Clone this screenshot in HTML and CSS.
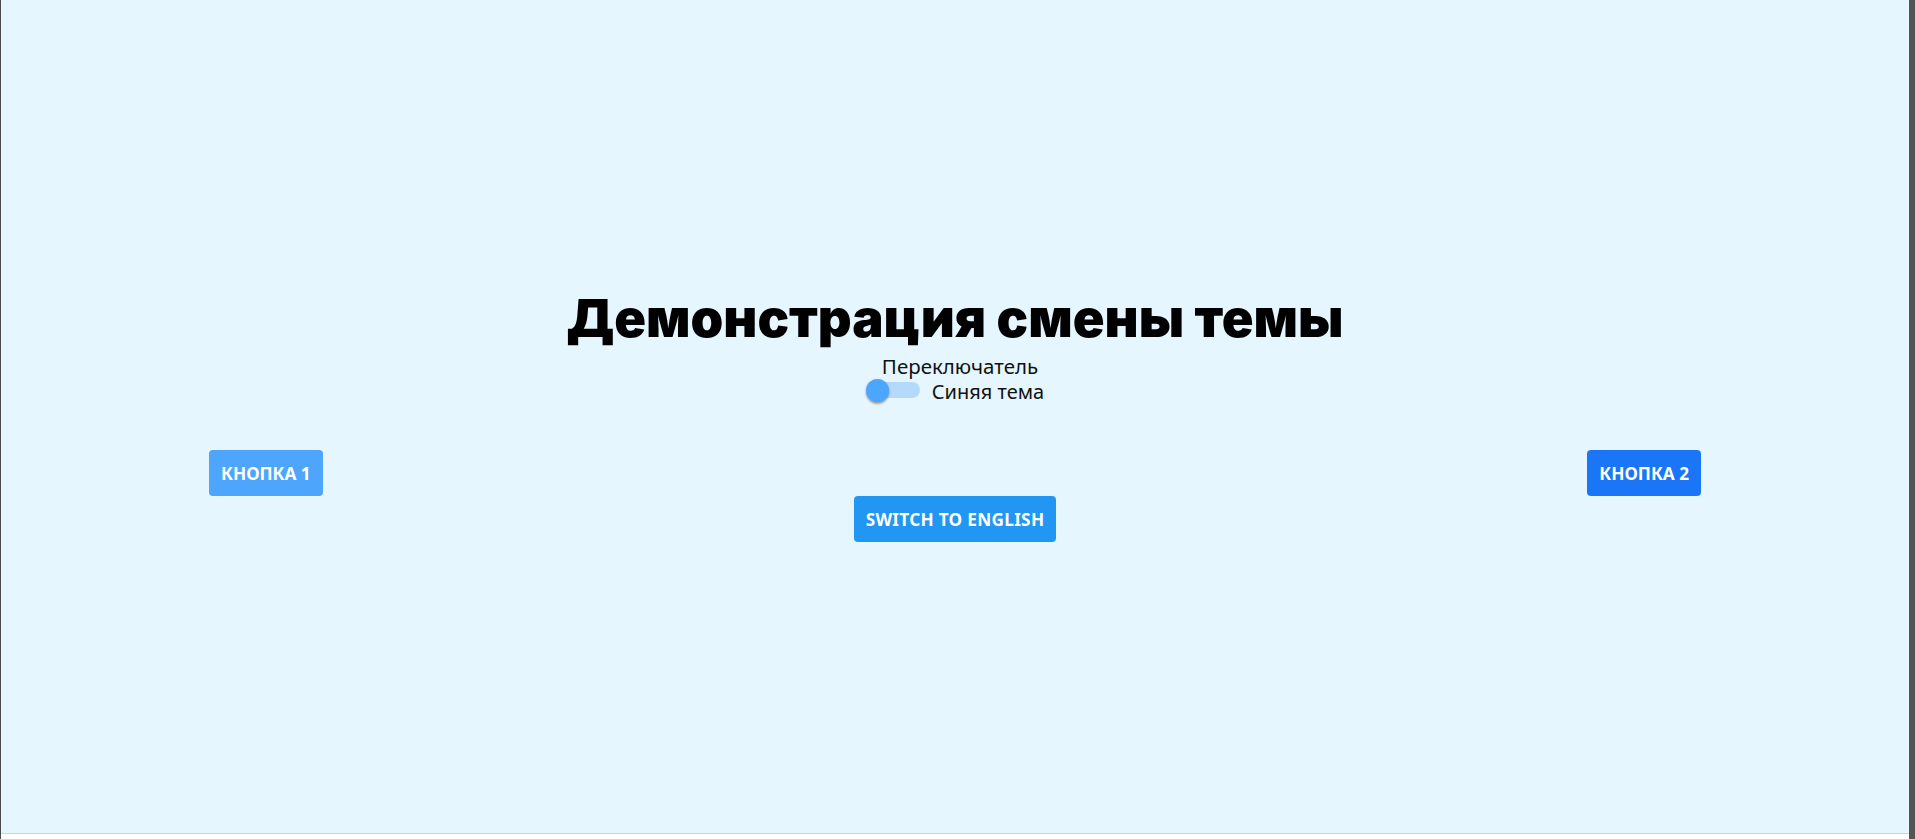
FILE: index.html
```html
<!DOCTYPE html>
<html lang="ru">
<head>
<meta charset="utf-8">
<title>Демонстрация смены темы</title>
<link rel="stylesheet" href="styles.css">
</head>
<body>
<div class="frame">
  <div class="edge-left"></div>
  <div class="column">
    <main class="page">
      <div class="content">
        <h1 class="title">Демонстрация смены темы</h1>
        <div class="switch-label">Переключатель</div>
        <label class="switch-row">
          <span class="switch">
            <span class="track"></span>
            <span class="thumb"></span>
          </span>
          <span class="switch-text">Синяя тема</span>
        </label>
        <div class="buttons-row">
          <button class="btn btn-light">Кнопка 1</button>
          <button class="btn btn-dark">Кнопка 2</button>
        </div>
        <button class="btn btn-main">Switch to English</button>
      </div>
    </main>
    <div class="status"></div>
  </div>
  <div class="edge-right"></div>
</div>
</body>
</html>
```
FILE: styles.css
```css
html, body {
  margin: 0;
  padding: 0;
  height: 100%;
  overflow: hidden;
}
body {
  background: #ffffff;
  font-family: "Noto Sans", "Open Sans", sans-serif;
}
.frame {
  display: flex;
  height: 839px;
}
.edge-left {
  width: 1px;
  background: #4b4b4b;
}
.edge-right {
  width: 6px;
  background: #545454;
}
.column {
  flex: 1;
  display: flex;
  flex-direction: column;
}
.page {
  height: 833px;
  background: #e5f6fe;
  display: flex;
  align-items: center;
  justify-content: center;
}
.status {
  flex: 1;
  border-top: 1px solid #d2d2d2;
  background: #ffffff;
}
.content {
  width: 100%;
  display: flex;
  flex-direction: column;
  align-items: center;
}
.title {
  margin: 0;
  font-family: Inter, "Liberation Sans", sans-serif;
  font-weight: 900;
  font-size: 52.5px;
  line-height: 54px;
  color: #000;
}
.switch-label {
  margin-top: 10px;
  padding-left: 10px;
  font-size: 20.5px;
  line-height: 22px;
  color: #111;
}
.switch-row {
  display: flex;
  align-items: flex-start;
  gap: 10px;
  height: 30px;
}
.switch {
  position: relative;
  width: 56px;
  height: 26px;
}
.track {
  position: absolute;
  left: 6px;
  top: 5px;
  width: 48px;
  height: 16px;
  border-radius: 8px;
  background: #b3dafc;
}
.thumb {
  position: absolute;
  left: 0;
  top: 2px;
  width: 23px;
  height: 23px;
  border-radius: 50%;
  background: #4da6fd;
  box-shadow: 0 2px 2px rgba(0,0,0,0.25), 0 1px 3px rgba(0,0,0,0.15);
}
.switch-text {
  font-size: 20px;
  line-height: 30px;
  color: #111;
}
.buttons-row {
  margin-top: 43px;
  width: 1492px;
  display: flex;
  justify-content: space-between;
}
.btn {
  height: 46px;
  padding: 0 12px;
  border: none;
  border-radius: 4px;
  color: #fff;
  font-family: "Noto Sans", "Open Sans", sans-serif;
  font-weight: 700;
  font-size: 17.2px;
  text-transform: uppercase;
  cursor: pointer;
}
.btn-light { background: #4da6fb; }
.btn-dark { background: #1a76f6; }
.btn-main {
  background: #2196f3;
  letter-spacing: 0.3px;
}
```
